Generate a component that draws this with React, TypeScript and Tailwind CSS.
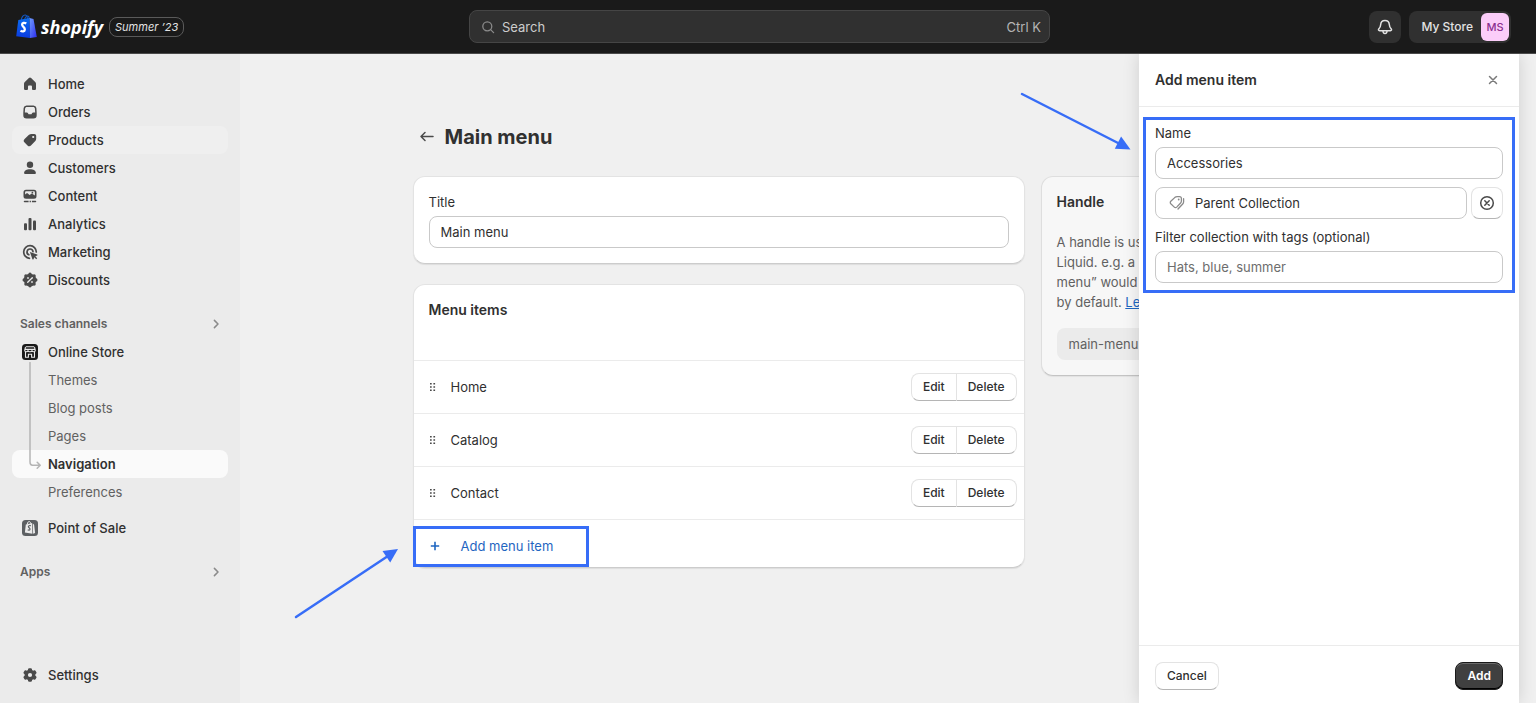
import type { ReactNode } from "react";

type IconProps = { children: ReactNode; className?: string };

function Icon({ children, className = "size-5" }: IconProps) {
  return (
    <svg viewBox="0 0 20 20" fill="currentColor" className={`shrink-0 ${className}`} aria-hidden="true">
      {children}
    </svg>
  );
}

const HomeIcon = () => (
  <Icon>
    <path d="M8.9 4.1a1.6 1.6 0 0 1 2.2 0l4.1 3.8c.5.5.8 1.1.8 1.8v4.8c0 .9-.7 1.6-1.6 1.6h-1.1c-.8 0-1.3-.6-1.3-1.3v-2.1c0-.7-.5-1.2-1.2-1.2H9.200c-.7 0-1.200.5-1.200 1.200v2.100c0 .7-.5 1.300-1.300 1.300H5.600c-.9 0-1.600-.7-1.600-1.600V9.700c0-.7.3-1.300.8-1.800z" />
  </Icon>
);

const OrdersIcon = () => (
  <Icon>
    <path
      fillRule="evenodd"
      d="M6.600 3.500h6.800a3 3 0 0 1 3 2.600l.3 4.600v2.600a3.200 3.200 0 0 1-3.200 3.200H6.500a3.200 3.200 0 0 1-3.200-3.200v-2.600l.3-4.600a3 3 0 0 1 3-2.600Zm.2 1.500c-.9 0-1.600.6-1.700 1.500l-.3 4h1.900c.6 0 1.100.3 1.300.8l.2.4c.2.400.5.600.9.600h1.800c.4 0 .7-.2.9-.6l.2-.4c.2-.5.700-.8 1.300-.8h1.900l-.3-4c-.1-.9-.8-1.500-1.700-1.500Z"
    />
  </Icon>
);

const ProductsIcon = () => (
  <Icon>
    <path
      fillRule="evenodd"
      d="M11.700 4h2.500c1.200 0 2 .9 2 2v2.700c0 .9-.3 1.700-.9 2.300l-4.100 4.300a2.600 2.600 0 0 1-3.700.1l-2.900-2.800a2.600 2.600 0 0 1 0-3.700l4.100-4c.8-.6 1.800-.9 3-.9Zm1.500 4.100a1.100 1.100 0 1 0 0-2.200 1.100 1.100 0 0 0 0 2.200Z"
    />
  </Icon>
);

const CustomersIcon = () => (
  <Icon>
    <circle cx="10" cy="6.700" r="3.200" />
    <path d="M10 11.200c3.400 0 5.900 1.600 5.900 3.700 0 .7-.6 1.200-1.300 1.200H5.400c-.7 0-1.300-.5-1.300-1.200 0-2.100 2.500-3.700 5.900-3.700Z" />
  </Icon>
);

const ContentIcon = () => (
  <Icon>
    <path
      fillRule="evenodd"
      d="M6 3.800h8a2.500 2.500 0 0 1 2.500 2.500v4a2.500 2.500 0 0 1-2.500 2.500H6a2.500 2.500 0 0 1-2.500-2.500v-4A2.500 2.500 0 0 1 6 3.800Zm-.9 4.700 1.200-1c.5-.4 1.100-.4 1.600 0l1.600 1.500 1.600-1.100c.4-.3 1-.3 1.400 0l2.400 1.500V6.500c0-.8-.5-1.200-1.200-1.200H6.300c-.8 0-1.200.5-1.200 1.200Zm7.300-.9a.9.9 0 1 0 0-1.800.9.9 0 0 0 0 1.800Z"
    />
    <path d="M4.500 14.800h4.100v1.500H4.500a.7.7 0 0 1 0-1.500ZM9.600 14.800h1.300v1.500H9.600ZM11.900 14.800h3.600a.7.7 0 0 1 0 1.500h-3.600Z" />
  </Icon>
);

const AnalyticsIcon = () => (
  <Icon>
    <rect x="4" y="9.300" width="3" height="7" rx="1" />
    <rect x="8.500" y="4" width="3" height="12.300" rx="1" />
    <rect x="13" y="6.500" width="3" height="9.800" rx="1" />
  </Icon>
);

const MarketingIcon = () => (
  <Icon>
    <g fill="none" stroke="currentColor" strokeWidth="1.700" strokeLinecap="round">
      <path d="M9.500 16.300A6.300 6.300 0 1 1 16.300 10" />
      <path d="M8.900 12.800A3 3 0 1 1 13 9.700" />
    </g>
    <path d="m9.900 9.900 7.300 2.500c.5.200.5.900 0 1.100l-1.900.8 1.900 1.900-1 1-1.900-1.900-.8 1.900c-.2.500-.9.500-1.100 0Z" />
  </Icon>
);

const DiscountsIcon = () => (
  <Icon>
    <g>
      <circle cx="10" cy="10" r="6.300" />
      <circle cx="10" cy="4.200" r="1.700" />
      <circle cx="14.100" cy="5.900" r="1.700" />
      <circle cx="15.800" cy="10" r="1.700" />
      <circle cx="14.100" cy="14.100" r="1.700" />
      <circle cx="10" cy="15.800" r="1.700" />
      <circle cx="5.900" cy="14.100" r="1.700" />
      <circle cx="4.200" cy="10" r="1.700" />
      <circle cx="5.900" cy="5.900" r="1.700" />
    </g>
    <g className="fill-[#ebebeb] stroke-[#ebebeb]">
      <path d="m7.700 12.300 4.600-4.600" strokeWidth="1.300" strokeLinecap="round" />
      <circle cx="8" cy="8" r=".7" strokeWidth=".5" />
      <circle cx="12" cy="12" r=".7" strokeWidth=".5" />
    </g>
  </Icon>
);

const OnlineStoreIcon = () => (
  <Icon>
    <rect x="2" y="2" width="16" height="16" rx="3.500" className="fill-[#1a1a1a]" />
    <g fill="none" className="stroke-[#ebebeb]" strokeWidth="1.100">
      <path d="M5.800 4.800h8.400M5.500 5.200 4.700 8.300c0 1 .7 1.500 1.500 1.500S7.900 9.300 8 8.400c.1.900.9 1.400 2 1.400s1.900-.5 2-1.400c.1.900.9 1.400 1.800 1.400s1.500-.5 1.500-1.500l-.8-3.100M5 7.400h10M5.500 10v5.200h2.900v-3h3.200v3h2.900V10" />
    </g>
  </Icon>
);

const PointOfSaleIcon = () => (
  <Icon>
    <rect x="2" y="2" width="16" height="16" rx="3.500" className="fill-[#5c5f62]" />
    <path d="m5.800 6.400 6.300-1.300.3 10.700-7.500-1.400ZM12.800 5.600l1.300 1.100 1 8.300-2 .8Z" className="fill-[#ebebeb]" />
    <path d="M7.300 6.100c.2-1.900 1.300-2.800 2.200-2.500.8.200 1.100 1.100 1.200 1.900" fill="none" className="stroke-[#ebebeb]" />
    <path d="M10.900 7.800c-1.500-.6-2.600 0-2.500 1 .1.900 1.800 1.100 1.600 2.400-.1 1-1.400 1.100-2.300.5" fill="none" className="stroke-[#5c5f62]" strokeWidth="1.200" />
  </Icon>
);

const SettingsIcon = () => (
  <Icon>
    <path
      fillRule="evenodd"
      d="M9.100 3.200h1.800c.5 0 .9.400 1 .8l.2 1.100 1 .6 1.200-.4c.5-.2 1 0 1.200.4l.9 1.600c.3.400.2.900-.2 1.300l-.9.800v1.200l.9.800c.4.300.5.800.2 1.300l-.9 1.600c-.2.400-.7.600-1.200.4l-1.200-.4-1 .6-.2 1.100c-.1.400-.5.800-1 .8H9.100c-.5 0-.9-.4-1-.8l-.2-1.100-1-.6-1.200.4c-.5.200-1 0-1.200-.4l-.9-1.600c-.3-.5-.2-1 .2-1.300l.9-.8V9.400l-.9-.8c-.4-.4-.5-.9-.2-1.300l.9-1.600c.2-.4.700-.6 1.200-.4l1.200.4 1-.6.200-1.100c.1-.4.500-.8 1-.8ZM10 12.100a2.100 2.100 0 1 0 0-4.200 2.100 2.100 0 0 0 0 4.200Z"
    />
  </Icon>
);

const Chevron = () => (
  <Icon className="size-4 text-[#8a8a8a]">
    <path d="m8 5.500 4.500 4.500L8 14.500" fill="none" stroke="currentColor" strokeWidth="1.900" strokeLinecap="round" strokeLinejoin="round" />
  </Icon>
);

function NavItem({ icon, label, hovered = false }: { icon: ReactNode; label: string; hovered?: boolean }) {
  return (
    <a
      href="#"
      className={`flex h-7 items-center gap-2 rounded-lg px-2 font-[450] text-[#303030] ${hovered ? "bg-[#efefef]" : ""}`}
    >
      <span className="text-[#4a4a4a]">{icon}</span>
      {label}
    </a>
  );
}

function SubItem({ label }: { label: string }) {
  return (
    <a href="#" className="flex h-7 items-center pl-9 text-[#616161]">
      {label}
    </a>
  );
}

function SectionHeading({ label }: { label: string }) {
  return (
    <button className="mt-4 flex h-7 w-full items-center justify-between pr-1 pl-2 text-[12px] font-semibold text-[#616161]">
      {label}
      <Chevron />
    </button>
  );
}

function Sidebar() {
  return (
    <nav className="flex w-60 shrink-0 flex-col bg-[#ebebeb] px-3 pt-4 pb-[14px]">
      <NavItem icon={<HomeIcon />} label="Home" />
      <NavItem icon={<OrdersIcon />} label="Orders" />
      <NavItem icon={<ProductsIcon />} label="Products" hovered />
      <NavItem icon={<CustomersIcon />} label="Customers" />
      <NavItem icon={<ContentIcon />} label="Content" />
      <NavItem icon={<AnalyticsIcon />} label="Analytics" />
      <NavItem icon={<MarketingIcon />} label="Marketing" />
      <NavItem icon={<DiscountsIcon />} label="Discounts" />
      <SectionHeading label="Sales channels" />
      <div className="relative">
        <NavItem icon={<OnlineStoreIcon />} label="Online Store" />
        <SubItem label="Themes" />
        <SubItem label="Blog posts" />
        <SubItem label="Pages" />
        <a href="#" className="flex h-7 items-center rounded-lg bg-[#fafafa] pl-9 font-semibold text-[#303030]">
          Navigation
        </a>
        <SubItem label="Preferences" />
        <svg viewBox="0 0 16 112" className="absolute top-6 left-4 h-28 w-4 text-[#b5b5b5]" fill="none" stroke="currentColor" strokeWidth="1.500" aria-hidden="true">
          <path d="M2 .5v99.500c0 2 .8 3.200 2.500 3.200H12M9.200 100.200l3 3-3 3" strokeLinecap="round" strokeLinejoin="round" />
        </svg>
      </div>
      <div className="mt-2">
        <NavItem icon={<PointOfSaleIcon />} label="Point of Sale" />
      </div>
      <SectionHeading label="Apps" />
      <div className="mt-auto">
        <NavItem icon={<SettingsIcon />} label="Settings" />
      </div>
    </nav>
  );
}

function ShopifyBag() {
  return (
    <svg viewBox="0 0 22 25" className="h-[25px] w-[22px]" aria-hidden="true">
      <defs>
        <linearGradient id="bagFront" x1="0" y1="0" x2="0" y2="1">
          <stop offset="0" stopColor="#0a6cf0" />
          <stop offset="1" stopColor="#0b3be0" />
        </linearGradient>
        <linearGradient id="bagSide" x1="0" y1="0" x2="1" y2="1">
          <stop offset="0" stopColor="#6f9cfb" />
          <stop offset="1" stopColor="#2b2bf0" />
        </linearGradient>
      </defs>
      <path d="M5.200 6.500C5.500 3.200 7.300.8 9.300 1c1.600.2 2.100 2.500 2.200 4.500M8.600 6c.2-2.500 1.800-4.200 3.300-3.900 1 .2 1.400 1.500 1.500 2.900" fill="none" stroke="#1257c4" strokeWidth="1.100" />
      <path d="M2.300 5.900 13.600 4l.4 20L.2 22.200Z" fill="url(#bagFront)" />
      <path d="m13.600 4 3.900 1L20.800 23 14 24Z" fill="url(#bagSide)" />
      <path d="M10.300 9.400c-2-1-4.200-.6-4.200 1.200 0 2.200 3 2.500 2.700 5-.2 2.100-2.600 2.300-4.300 1" fill="none" stroke="#fff" strokeWidth="2.300" />
    </svg>
  );
}

function TopBar() {
  return (
    <header className="grid h-[54px] shrink-0 grid-cols-[1fr_581px_1fr] items-center border-b border-[#4a4a4a] bg-[#1a1a1a] pr-[17px]">
      <div className="flex items-center pl-4">
        <a href="#" className="flex items-center gap-[3px]" aria-label="Shopify home">
          <ShopifyBag />
          <span className="font-['Open_Sans',sans-serif] text-[18px] leading-6 font-bold text-white italic">shopify</span>
        </a>
        <span className="ml-[6px] rounded-lg border border-[#5a5a5a] px-[5px] text-[11px] leading-[18px] font-[450] text-[#e3e3e3] italic">
          Summer ’23
        </span>
      </div>
      <label className="flex h-[33px] items-center gap-2 rounded-lg border border-[#454545] bg-[#303030] px-2 text-[#b5b5b5]">
        <Icon className="size-5 text-[#8a8a8a]">
          <g fill="none" stroke="currentColor" strokeWidth="1.300" strokeLinecap="round">
            <circle cx="9.300" cy="9.300" r="4.500" />
            <path d="m12.600 12.600 3 3" />
          </g>
        </Icon>
        <input
          type="search"
          aria-label="Search"
          placeholder="Search"
          className="-ml-1 min-w-0 flex-1 bg-transparent outline-none placeholder:text-[#cccccc]"
        />
        <span>Ctrl K</span>
      </label>
      <div className="flex items-center justify-end gap-2 pr-2">
        <button aria-label="Notifications" className="flex size-8 items-center justify-center rounded-lg bg-[#303030] text-[#e3e3e3]">
          <Icon>
            <g fill="none" stroke="currentColor" strokeWidth="1.500" strokeLinecap="round" strokeLinejoin="round">
              <path d="M10 3.400c-2.500 0-4.200 1.800-4.300 4.100-.1 2-.6 3-1.800 4.300-.8.900-.5 1.900.7 1.900h10.800c1.200 0 1.500-1 .7-1.900-1.200-1.300-1.700-2.300-1.800-4.300-.1-2.300-1.800-4.100-4.300-4.100Z" />
              <path d="M8 14.200c.1 1.300.9 2.200 2 2.200s1.900-.9 2-2.200" />
            </g>
          </Icon>
        </button>
        <button className="flex h-8 items-center gap-2 rounded-lg bg-[#303030] pr-[2px] pl-3 text-[12px] font-medium text-[#e3e3e3]">
          My Store
          <span className="flex size-7 items-center justify-center rounded-md bg-[#fbcdf9] text-[11px] font-[450] text-[#8b2f8f]">MS</span>
        </button>
      </div>
    </header>
  );
}

function RowButton({ label, side }: { label: string; side: "left" | "right" }) {
  return (
    <button
      className={`h-7 border border-[#e3e3e3] border-b-[#b5b5b5] bg-white px-[11px] text-[12px] font-medium text-[#303030] ${
        side === "left" ? "rounded-l-lg" : "-ml-px rounded-r-lg"
      }`}
    >
      {label}
    </button>
  );
}

function MenuRow({ label }: { label: string }) {
  return (
    <li className="flex h-[53px] items-center border-t border-[#ebebeb] pr-[7px] pl-[13px]">
      <svg viewBox="0 0 12 12" className="mr-3 size-3 text-[#4a4a4a]" fill="currentColor" aria-hidden="true">
        <path d="M3 2h1.700v1.600H3ZM6.400 2h1.700v1.600H6.400ZM3 5.200h1.700v1.600H3ZM6.400 5.200h1.700v1.600H6.400ZM3 8.400h1.700V10H3ZM6.400 8.400h1.700V10H6.400Z" />
      </svg>
      <span className="flex-1">{label}</span>
      <RowButton label="Edit" side="left" />
      <RowButton label="Delete" side="right" />
    </li>
  );
}

const card = "rounded-xl border border-[#e3e3e3] border-b-[#cccccc] bg-white shadow-[0_1px_1px_rgba(0,0,0,0.08)]";
const field = "block h-8 w-full rounded-lg border border-[#c9c9c9] bg-white px-[11px] text-[#303030] outline-none placeholder:text-[#6d6d6d]";

function MainContent() {
  return (
    <main className="flex-1 px-4 pt-[69px]">
      <div className="mx-auto max-w-[934px]">
        <div className="flex h-7 items-center gap-2 pl-1">
          <button aria-label="Back" className="text-[#4a4a4a]">
            <Icon>
              <path d="M16 9.500H4M8 5.500l-4 4 4 4" fill="none" stroke="currentColor" strokeWidth="1.500" strokeLinecap="round" strokeLinejoin="round" />
            </Icon>
          </button>
          <h1 className="text-[20px] font-bold text-[#303030]">Main menu</h1>
        </div>
        <div className="mt-[25px] grid grid-cols-[2fr_1fr] items-start gap-4">
          <div className="flex flex-col gap-5">
            <section className={`${card} p-[15px]`}>
              <label htmlFor="menu-title" className="mb-1 block leading-5">
                Title
              </label>
              <input id="menu-title" defaultValue="Main menu" className={field} />
            </section>
            <section className={`${card} relative`}>
              <h2 className="h-[75px] px-[15px] pt-[15px] text-[14px] font-semibold">Menu items</h2>
              <ul>
                <MenuRow label="Home" />
                <MenuRow label="Catalog" />
                <MenuRow label="Contact" />
              </ul>
              <button className="flex h-12 w-full items-center gap-5 border-t border-[#ebebeb] pt-1 pl-[15px] text-[#1f66c1]">
                <svg viewBox="0 0 12 12" className="size-3" fill="none" stroke="currentColor" strokeWidth="1.600" aria-hidden="true">
                  <path d="M6 1.800v8.400M1.800 6h8.400" />
                </svg>
                Add menu item
              </button>
              <div className="pointer-events-none absolute bottom-0 -left-px h-[41px] w-44 border-[3px] border-[#376df7]" />
              <svg viewBox="0 0 104 72" className="pointer-events-none absolute -bottom-[52px] -left-[120px] h-[72px] w-[104px] text-[#376df7]" fill="none" aria-hidden="true">
                <path d="M2 70 94 9" stroke="currentColor" strokeWidth="2.500" strokeLinecap="round" />
                <path d="m104 2-15.500 2 7.700 11.500Z" fill="currentColor" />
              </svg>
            </section>
          </div>
          <section className="rounded-xl border border-[#dedede] border-b-[#c4c4c4] bg-[#f7f7f7] p-[15px] shadow-[0_1px_1px_rgba(0,0,0,0.06)]">
            <h2 className="text-[14px] font-semibold">Handle</h2>
            <p className="mt-5 text-[#616161]">
              A handle is used to reference a menu in Liquid. e.g. a menu with the title “Sidebar menu” would have the handle sidebar-menu by default.{" "}
              <a href="#" className="text-[#1f66c1] underline">
                Learn more
              </a>
            </p>
            <div className="mt-4 flex h-8 items-center rounded-lg bg-[#ebebeb] px-3 text-[#616161]">main-menu</div>
          </section>
        </div>
      </div>
    </main>
  );
}

function Drawer() {
  return (
    <aside
      aria-label="Add menu item"
      className="absolute top-0 right-[17px] bottom-0 flex w-[380px] flex-col bg-white shadow-[0_0_16px_rgba(0,0,0,0.14)]"
    >
      <header className="flex h-[53px] shrink-0 items-center justify-between border-b border-[#ebebeb] px-4">
        <h2 className="text-[14px] font-semibold">Add menu item</h2>
        <button aria-label="Close" className="text-[#7a7a7a]">
          <Icon>
            <path d="m6.500 6.500 7 7M13.500 6.500l-7 7" stroke="currentColor" strokeWidth="1.500" strokeLinecap="round" />
          </Icon>
        </button>
      </header>
      <div className="relative flex-1 px-4 pt-4">
        <label htmlFor="item-name" className="mb-1 block leading-5">
          Name
        </label>
        <input id="item-name" defaultValue="Accessories" className={field} />
        <div className="mt-2 flex gap-1">
          <div className="relative flex-1">
            <Icon className="pointer-events-none absolute top-1.5 left-3 size-5 text-[#8a8a8a]">
              <g fill="none" stroke="currentColor" strokeWidth="1.300" strokeLinecap="round" strokeLinejoin="round">
                <path d="M10.300 3.700h2.200c1.100 0 1.900.8 1.900 1.900v2.300c0 .8-.3 1.500-.8 2.100l-3.900 4.100c-.7.700-1.700.7-2.400 0l-3.500-3.300c-.7-.7-.7-1.800 0-2.500l3.900-3.700c.7-.6 1.600-.9 2.600-.9Z" />
                <path d="M16.600 5.700v3.100c0 .9-.3 1.600-.9 2.200L11 16" />
              </g>
              <circle cx="11.700" cy="6.500" r=".9" />
            </Icon>
            <input aria-label="Link" defaultValue="Parent Collection" className={`${field} pl-[39px]!`} />
          </div>
          <button aria-label="Clear link" className="flex size-8 items-center justify-center rounded-lg border border-[#e3e3e3] border-b-[#b5b5b5] bg-white text-[#4a4a4a]">
            <Icon>
              <g fill="none" stroke="currentColor" strokeWidth="1.500" strokeLinecap="round">
                <circle cx="10" cy="10" r="6.300" />
                <path d="m7.800 7.800 4.400 4.400M12.200 7.800l-4.400 4.400" />
              </g>
            </Icon>
          </button>
        </div>
        <label htmlFor="item-tags" className="mt-2 mb-1 block leading-5">
          Filter collection with tags (optional)
        </label>
        <input id="item-tags" placeholder="Hats, blue, summer" className={field} />
        <div className="pointer-events-none absolute top-[10px] right-1 left-1 h-44 border-[3px] border-[#376df7]" />
      </div>
      <footer className="flex h-[58px] shrink-0 items-center justify-between border-t border-[#ebebeb] px-4 pt-[3px]">
        <button className="h-7 rounded-lg border border-[#e3e3e3] border-b-[#b5b5b5] bg-white px-[11px] text-[12px] font-medium">Cancel</button>
        <button className="h-7 rounded-lg border border-[#1a1a1a] bg-[#404040] px-[11px] text-[12px] font-semibold text-white shadow-[inset_0_1px_0_#6b6b6b,inset_0_-1px_0_#000]">
          Add
        </button>
      </footer>
      <svg viewBox="0 0 112 60" className="pointer-events-none absolute top-[38px] right-full mr-2 h-[60px] w-28 text-[#376df7]" fill="none" aria-hidden="true">
        <path d="m3 2 98 50" stroke="currentColor" strokeWidth="2.500" strokeLinecap="round" />
        <path d="m111.500 57.500-15.700-.7 6.300-12.200Z" fill="currentColor" />
      </svg>
    </aside>
  );
}

export default function App() {
  return (
    <div className="flex h-screen flex-col bg-[#f0f0f0] font-['Inter',sans-serif] text-[13px] leading-5 text-[#303030]">
      <TopBar />
      <div className="relative flex min-h-0 flex-1 overflow-hidden">
        <Sidebar />
        <div className="flex min-w-0 flex-1 pr-[17px]">
          <MainContent />
        </div>
        <Drawer />
      </div>
    </div>
  );
}
